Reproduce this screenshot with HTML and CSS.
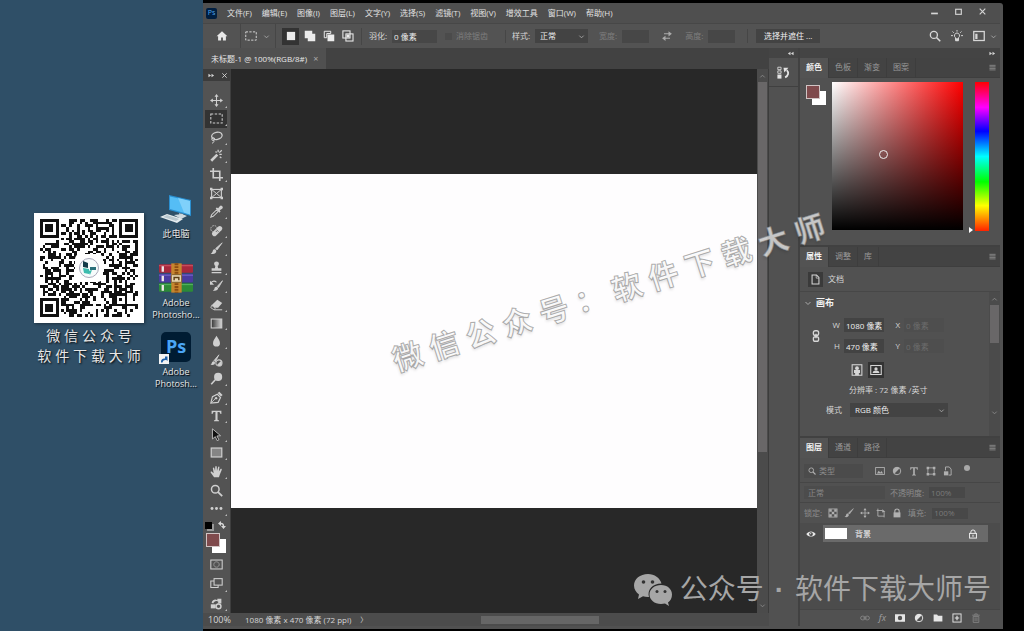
FILE: index.html
```html
<!DOCTYPE html>
<html lang="zh-CN">
<head>
    <meta charset="UTF-8">
    <meta name="viewport" content="width=device-width, initial-scale=1.0">
    <title>未标题-1</title>
    <link rel="stylesheet" href="styles.css">
</head>
<body>

<!-- Icon sprite -->
<svg class="sprite" xmlns="http://www.w3.org/2000/svg">
    <symbol id="i-home" viewBox="0 0 16 16"><path d="M8 1.5 0.8 8.3h2V14h4v-4h2.4v4h4V8.3h2z" fill="currentColor"/></symbol>
    <symbol id="i-marquee" viewBox="0 0 16 16"><rect x="1" y="2.5" width="14" height="11" fill="none" stroke="currentColor" stroke-width="1.3" stroke-dasharray="3 1.8"/></symbol>
    <symbol id="i-chev" viewBox="0 0 16 16"><path d="M3 6l5 5 5-5" fill="none" stroke="currentColor" stroke-width="2"/></symbol>
    <symbol id="i-new" viewBox="0 0 16 16"><rect x="2.5" y="2.5" width="11" height="11" fill="currentColor"/></symbol>
    <symbol id="i-add" viewBox="0 0 16 16"><path d="M1 1h10v4h4v10H5v-4H1z" fill="currentColor"/></symbol>
    <symbol id="i-sub" viewBox="0 0 16 16"><path d="M1.7 1.7h8.6v3H5v5.600H1.7z" fill="none" stroke="currentColor" stroke-width="1.3"/><rect x="6" y="6" width="9" height="9" fill="currentColor"/></symbol>
    <symbol id="i-cross" viewBox="0 0 16 16"><rect x="1.2" y="1.2" width="9.5" height="9.5" fill="none" stroke="currentColor" stroke-width="1.4"/><rect x="5.2" y="5.2" width="9.5" height="9.5" fill="none" stroke="currentColor" stroke-width="1.4"/><rect x="6" y="6" width="4" height="4" fill="currentColor"/></symbol>
    <symbol id="i-swap" viewBox="0 0 16 16"><path d="M4 5h7M12 11H5" stroke="currentColor" stroke-width="1.6"/><path d="M10 1.5 14.5 5 10 8.5zM6 7.5 1.5 11 6 14.5z" fill="currentColor"/></symbol>
    <symbol id="i-search" viewBox="0 0 16 16"><circle cx="6.5" cy="6.5" r="4.7" fill="none" stroke="currentColor" stroke-width="1.8"/><path d="M10 10l5 5" stroke="currentColor" stroke-width="2.2"/></symbol>
    <symbol id="i-bulb" viewBox="0 0 16 16"><path d="M8 4a3.5 3.5 0 0 0-2 6.3V14h4v-3.7A3.5 3.5 0 0 0 8 4z" fill="none" stroke="currentColor" stroke-width="1.3"/><path d="M6 11h4v4H6z" fill="currentColor"/><path d="M8 0v2.2M2 2l1.7 1.7M14 2l-1.7 1.7M0 7.5h2.6M13.4 7.5H16" stroke="currentColor" stroke-width="1.3"/></symbol>
    <symbol id="i-layout" viewBox="0 0 16 16"><rect x="1" y="2" width="14" height="12" fill="none" stroke="currentColor" stroke-width="1.7"/><path d="M3 5h3v7H3z" fill="currentColor"/></symbol>
    <symbol id="i-min" viewBox="0 0 16 16"><path d="M2 10h12v3H2z" fill="currentColor"/></symbol>
    <symbol id="i-max" viewBox="0 0 16 16"><rect x="3" y="4" width="10" height="9" fill="none" stroke="currentColor" stroke-width="2"/></symbol>
    <symbol id="i-close" viewBox="0 0 16 16"><path d="M3 3l10 10M13 3L3 13" stroke="currentColor" stroke-width="2"/></symbol>
    <symbol id="i-dbl" viewBox="0 0 16 16"><path d="M1 4l6 4-6 4zM8 4l6 4-6 4z" fill="currentColor"/></symbol>
    <symbol id="i-dbl-l" viewBox="0 0 16 16"><path d="M8 4 2 8l6 4zM15 4 9 8l6 4z" fill="currentColor"/></symbol>
    <symbol id="i-menu" viewBox="0 0 16 16"><path d="M1 3h14M1 6.5h14M1 10h14M1 13.5h14" stroke="currentColor" stroke-width="1.7"/></symbol>
    <symbol id="i-move" viewBox="0 0 16 16"><path d="M8 2v12M2 8h12" stroke="currentColor" stroke-width="1.3"/><path d="M8 0l2.5 3.5h-5zM8 16l2.5-3.5h-5zM0 8l3.5-2.5v5zM16 8l-3.5-2.5v5z" fill="currentColor"/></symbol>
    <symbol id="i-lasso" viewBox="0 0 16 16"><ellipse cx="8.5" cy="6" rx="6.5" ry="4.3" transform="rotate(-12 8.5 6)" fill="none" stroke="currentColor" stroke-width="1.6"/><circle cx="4" cy="10" r="1.8" fill="none" stroke="currentColor" stroke-width="1.2"/><path d="M4.500 11.500c1 1.500 0 3-2 3.500" fill="none" stroke="currentColor" stroke-width="1.2"/></symbol>
    <symbol id="i-wand" viewBox="0 0 16 16"><path d="M1.5 14.5 9 7" stroke="currentColor" stroke-width="3.2"/><path d="M10 1v3M14.5 6.5h-3M7 3l1 1.5M14 11l-2-1.500M14.500 1.500l-3 3" stroke="currentColor" stroke-width="1.6"/></symbol>
    <symbol id="i-crop" viewBox="0 0 16 16"><path d="M4 0v12h12M0 4h12v12" fill="none" stroke="currentColor" stroke-width="2"/></symbol>
    <symbol id="i-frame" viewBox="0 0 16 16"><rect x="2" y="3" width="12" height="10" fill="none" stroke="currentColor" stroke-width="1.4"/><path d="M2 3l12 10M14 3L2 13" stroke="currentColor" stroke-width="1.2"/><path d="M0 1h3v3H0zM13 1h3v3h-3zM0 12h3v3H0zM13 12h3v3h-3z" fill="currentColor"/></symbol>
    <symbol id="i-dropper" viewBox="0 0 16 16"><path d="M1 15l1-3 6-6 2 2-6 6z" fill="none" stroke="currentColor" stroke-width="1.3"/><path d="M7 4l1.5-1 1.5 1 2-2.500a2 2 0 0 1 3 3L12 6.500l1 1.500-1.500 1.500z" fill="currentColor"/></symbol>
    <symbol id="i-heal" viewBox="0 0 16 16"><path d="M5.500 12 12 5.500" stroke="currentColor" stroke-width="6" stroke-linecap="round"/><circle cx="5" cy="6" r="4" fill="none" stroke="currentColor" stroke-dasharray="2 1.2"/><path d="M8 7l2.500 2.500M7 8.500l1.500 1.500" stroke="#535353"/></symbol>
    <symbol id="i-brush" viewBox="0 0 16 16"><path d="M15 1 7 8l1.700 1.700z" fill="currentColor" stroke="currentColor"/><path d="M6.500 9c-2-.5-3 .8-3.200 2.300C3 13 2 13.500.8 14c2.500 1.500 7 .7 7-3.200z" fill="currentColor"/></symbol>
    <symbol id="i-stamp" viewBox="0 0 16 16"><circle cx="8" cy="3.500" r="3" fill="currentColor"/><path d="M6.800 5h2.400l.8 4h4v3H2V9h4zM2 13.500h12V15H2z" fill="currentColor"/></symbol>
    <symbol id="i-histbrush" viewBox="0 0 16 16"><path d="M15.500 2 9 9l1.500 1.500z" fill="currentColor" stroke="currentColor"/><path d="M8.500 9.500c-2-.3-3 1-3 2.200 0 1.300-1 2-2 2.300 2.500 1 6.500.5 6.500-2.800z" fill="currentColor"/><path d="M1 5c2-3 5-3 7-1" fill="none" stroke="currentColor" stroke-width="1.3"/><path d="M0 2v5h5z" fill="currentColor"/></symbol>
    <symbol id="i-eraser" viewBox="0 0 16 16"><path d="M9 2l6 4-5 6H6L2 9z" fill="currentColor"/><path d="M2 9l4.500 3.500L5 14.500 1 12z" fill="none" stroke="currentColor"/><path d="M5 14.500h10" stroke="currentColor" stroke-width="1.2"/></symbol>
    <symbol id="i-gradient" viewBox="0 0 16 16"><linearGradient id="g1"><stop offset="0" stop-color="#333"/><stop offset="1" stop-color="#d8d8d8"/></linearGradient><rect x="1.5" y="2.5" width="13" height="11" fill="url(#g1)" stroke="currentColor" stroke-width="1.3"/></symbol>
    <symbol id="i-drop" viewBox="0 0 16 16"><path d="M8 1c2 3.500 4.300 5.800 4.300 9a4.300 4.300 0 0 1-8.600 0C3.700 6.800 6 4.500 8 1z" fill="currentColor"/></symbol>
    <symbol id="i-mixer" viewBox="0 0 16 16"><path d="M11 1 5 8l1.500 1.500z" fill="currentColor" stroke="currentColor"/><path d="M4.500 9C2 9 3 12 .5 13c2 1 6 .7 5.700-2.500z" fill="currentColor"/><circle cx="11" cy="11" r="3.8" fill="none" stroke="currentColor" stroke-width="1.3"/><path d="M8.500 13.500l5-5A3.800 3.800 0 0 1 11 15z" fill="currentColor"/></symbol>
    <symbol id="i-dodge" viewBox="0 0 16 16"><circle cx="10" cy="6" r="5" fill="currentColor"/><path d="M1.500 15l5-5.500" stroke="currentColor" stroke-width="2"/></symbol>
    <symbol id="i-pen" viewBox="0 0 16 16"><path d="M1 15l2-8 6-3 4 4-3 6z" fill="none" stroke="currentColor" stroke-width="1.4"/><path d="M9.500 2.500 11.500.8l4 4-2 2z" fill="currentColor"/><path d="M1.500 14.500 7 9" stroke="currentColor"/><circle cx="7.500" cy="8.800" r="1.500" fill="currentColor"/></symbol>
    <symbol id="i-type" viewBox="0 0 16 16"><path d="M2 2h12v4h-1.200c-.2-1.700-.8-2.300-2.600-2.300H9.300v9c0 .9.300 1.100 1.800 1.200V15H4.900v-1.100c1.500-.1 1.800-.3 1.800-1.200v-9h-.9c-1.800 0-2.400.6-2.600 2.300H2z" fill="currentColor"/></symbol>
    <symbol id="i-arrow" viewBox="0 0 16 16"><path d="M3 1l10 8.500-4.500.3 2.500 4.700-2.200 1-2.300-4.800L3 13.500z" fill="#111" stroke="currentColor"/></symbol>
    <symbol id="i-rect" viewBox="0 0 16 16"><rect x="1.5" y="2.5" width="13" height="11" fill="#858585" stroke="currentColor" stroke-width="1.5"/></symbol>
    <symbol id="i-hand" viewBox="0 0 16 16"><path d="M5 15 1 9.500c-.8-1.200.8-2 1.700-1L4.500 10 3.500 4c0-1.200 1.400-1.300 1.700-.2L6.200 7.500 6.500 2c.1-1.200 1.700-1.200 1.800 0l.3 5.300L10 2.500c.3-1.200 1.800-.8 1.600.3l-.7 5.200 2-3c.8-1 2 0 1.500 1L12 12l-1 3z" fill="currentColor"/></symbol>
    <symbol id="i-dots" viewBox="0 0 16 16"><circle cx="2.500" cy="8" r="1.800" fill="currentColor"/><circle cx="8" cy="8" r="1.800" fill="currentColor"/><circle cx="13.500" cy="8" r="1.800" fill="currentColor"/></symbol>
    <symbol id="i-mask" viewBox="0 0 16 16"><rect x="1" y="2.5" width="14" height="11" fill="none" stroke="currentColor" stroke-width="1.3"/><circle cx="8" cy="8" r="3.3" fill="none" stroke="currentColor" stroke-dasharray="1.5 1"/></symbol>
    <symbol id="i-screen" viewBox="0 0 16 16"><path d="M5 5H1v8h9v-3" fill="none" stroke="currentColor" stroke-width="1.3"/><rect x="5" y="2" width="10" height="8" fill="none" stroke="currentColor" stroke-width="1.3"/></symbol>
    <symbol id="i-share" viewBox="0 0 16 16"><path d="M2 7c1-4 5-5 7-3V2h5v6H9L10.500 6C8 4 5 5 4 8z" fill="currentColor"/><path d="M1 9h6v5H1z" fill="currentColor"/><circle cx="10.500" cy="11.500" r="3" fill="none" stroke="currentColor" stroke-width="1.8"/></symbol>
    <symbol id="i-curve" viewBox="0 0 16 16"><path d="M4 5c5-1 7 2 7 6" fill="none" stroke="currentColor" stroke-width="3"/><path d="M6 0v10L0 5zM6 10h10l-5 6z" fill="currentColor"/></symbol>
    <symbol id="i-history" viewBox="0 0 16 16"><path d="M1 1.500h4v3H1zM1 6h4v3H1z" fill="none" stroke="currentColor"/><path d="M.5 10.500h5v5h-5z" fill="currentColor"/><path d="M10 14c4-2 5-6 2-9" fill="none" stroke="currentColor" stroke-width="2.2"/><path d="M8 2h6l-5 6z" fill="currentColor"/></symbol>
    <symbol id="i-doc" viewBox="0 0 16 16"><path d="M3 1.500h6.500L13 5v9.500H3z" fill="none" stroke="currentColor" stroke-width="1.5"/><path d="M9 1.500V6h4" fill="none" stroke="currentColor"/></symbol>
    <symbol id="i-link" viewBox="0 0 16 16"><rect x="4.500" y="1" width="7" height="6" rx="2.500" fill="none" stroke="currentColor" stroke-width="1.8"/><rect x="4.500" y="9" width="7" height="6" rx="2.500" fill="none" stroke="currentColor" stroke-width="1.8"/><path d="M8 5v6" stroke="currentColor" stroke-width="1.8"/></symbol>
    <symbol id="i-portrait" viewBox="0 0 16 16"><rect x="1.5" y="1" width="13" height="14" fill="none" stroke="currentColor" stroke-width="1.4"/><circle cx="8" cy="5.500" r="2.500" fill="currentColor"/><path d="M4 8h8v4h-1.500V15h-5v-3H4z" fill="currentColor"/></symbol>
    <symbol id="i-landscape" viewBox="0 0 16 16"><rect x="1" y="2" width="14" height="12" fill="none" stroke="currentColor" stroke-width="1.4"/><circle cx="8" cy="6.500" r="2.200" fill="currentColor"/><path d="M3.500 12c0-2.500 2-3.500 4.500-3.500s4.500 1 4.500 3.500z" fill="currentColor"/></symbol>
    <symbol id="i-image" viewBox="0 0 16 16"><rect x="1" y="2.5" width="14" height="11" fill="none" stroke="currentColor" stroke-width="1.4"/><path d="M3 12l3-4.500 2.500 3L10.500 8l2.500 4z" fill="currentColor"/></symbol>
    <symbol id="i-adjust" viewBox="0 0 16 16"><circle cx="8" cy="8" r="6" fill="none" stroke="currentColor" stroke-width="1.5"/><path d="M12.300 3.700A6 6 0 0 1 3.700 12.300z" transform="rotate(180 8 8)" fill="currentColor"/></symbol>
    <symbol id="i-shape" viewBox="0 0 16 16"><rect x="3" y="3" width="10" height="10" fill="none" stroke="currentColor" stroke-width="1.3"/><path d="M1 1h4v4H1zM11 1h4v4h-4zM1 11h4v4H1zM11 11h4v4h-4z" fill="currentColor"/></symbol>
    <symbol id="i-smart" viewBox="0 0 16 16"><path d="M4 7V1.500h6L13 5v9.500H9" fill="none" stroke="currentColor" stroke-width="1.5"/><path d="M1.500 8.500h7V15h-7z" fill="currentColor"/></symbol>
    <symbol id="i-checker" viewBox="0 0 16 16"><rect x="1.5" y="1.5" width="13" height="13" fill="none" stroke="currentColor" stroke-width="1.3"/><path d="M2 2h4v4H2zM10 2h4v4h-4zM6 6h4v4H6zM2 10h4v4H2zM10 10h4v4h-4z" fill="currentColor"/></symbol>
    <symbol id="i-board" viewBox="0 0 16 16"><path d="M3 1v12h10M1 4h9l3 3v8" fill="none" stroke="currentColor" stroke-width="1.4"/><path d="M10 2l5 4-5 1z" fill="currentColor"/></symbol>
    <symbol id="i-lock" viewBox="0 0 16 16"><path d="M4.500 8V5a3.500 3.500 0 0 1 7 0v3" fill="none" stroke="currentColor" stroke-width="1.8"/><rect x="2.500" y="7" width="11" height="8" fill="currentColor"/></symbol>
    <symbol id="i-lock-o" viewBox="0 0 16 16"><path d="M4.500 7V5a3.500 3.500 0 0 1 7 0v2" fill="none" stroke="currentColor" stroke-width="1.5"/><rect x="2.500" y="7" width="11" height="7.500" fill="none" stroke="currentColor" stroke-width="1.5"/><path d="M7.200 9h1.600v3.500H7.200z" fill="currentColor"/></symbol>
    <symbol id="i-eye" viewBox="0 0 16 16"><path d="M.5 8C4 2.500 12 2.500 15.500 8 12 13.500 4 13.500.5 8z" fill="currentColor"/><circle cx="8" cy="8" r="3" fill="#444"/><circle cx="7.500" cy="7.500" r="1" fill="currentColor"/></symbol>
    <symbol id="i-chain" viewBox="0 0 16 16"><rect x="1" y="5" width="7" height="6" rx="3" fill="none" stroke="currentColor" stroke-width="1.5"/><rect x="8" y="5" width="7" height="6" rx="3" fill="none" stroke="currentColor" stroke-width="1.5"/><path d="M5 8h6" stroke="currentColor" stroke-width="1.5"/></symbol>
    <symbol id="i-addmask" viewBox="0 0 16 16"><path d="M0 2h16v12H0zM8 4.500a3.500 3.500 0 1 0 0 7 3.500 3.500 0 0 0 0-7z" fill="currentColor" fill-rule="evenodd"/></symbol>
    <symbol id="i-folder" viewBox="0 0 16 16"><path d="M1 2.500h5.500L8 4.500h7v9H1z" fill="currentColor"/></symbol>
    <symbol id="i-plus" viewBox="0 0 16 16"><rect x="1.5" y="1.5" width="13" height="13" fill="none" stroke="currentColor" stroke-width="1.5"/><path d="M8 4.500v7M4.500 8h7" stroke="currentColor" stroke-width="1.8"/></symbol>
    <symbol id="i-trash" viewBox="0 0 16 16"><path d="M2 3.500h12M6 3V1.500h4V3M3.500 5.500h9V15h-9zM6.500 7v6M9.500 7v6" fill="none" stroke="currentColor" stroke-width="1.4"/></symbol>
</svg>

<div class="desktop">

    <!-- Desktop icons -->
    <aside class="shortcuts">
        <div class="qr-card">
            <div class="qr">
                <svg id="qrCode" viewBox="0 0 37 37" shape-rendering="crispEdges"></svg>
                <svg class="qr-logo" viewBox="0 0 28 28">
                    <rect width="28" height="28" rx="5" fill="#fff"/>
                    <circle cx="14" cy="14" r="9.5" fill="#f6fbfb" stroke="#aab"/>
                    <path d="M8 7l5 2v5l-5-1z" fill="#123b48"/>
                    <path d="M8 14l6 1v5l-5-1zM13 17l4-1-2 5z" fill="#3dbcae"/>
                    <path d="M15 13h6v3h-6z" fill="#296f7a"/>
                </svg>
            </div>
            <p>微 信 公 众 号</p>
            <p>软 件 下 载 大 师</p>
        </div>
        <nav class="icons">
            <a href="#" class="shortcut">
                <svg viewBox="0 0 32 30">
                    <path d="M9 1l22 5v16L9 16z" fill="#2a8fd0"/><path d="M10 2.500l20 4.500v13.500L10 15z" fill="#55bdf5"/><path d="M18 4l12 3v13.500l-6-2z" fill="#7fd0fa"/>
                    <path d="M19 19l4 1v3h-4z" fill="#9fb3bf"/><path d="M14 21l8-1 5 2-6 3z" fill="#cfd9df"/>
                    <path d="M0 23l7-3 16 5-6 4z" fill="#e6ecef"/><path d="M3 23l4-2 12 4-3 2z" fill="#bac8d0"/>
                </svg>
                <span>此电脑</span>
            </a>
            <a href="#" class="shortcut">
                <svg viewBox="0 0 36 31">
                    <rect x="0" y="1" width="36" height="9" rx="1" fill="#a8283c"/><rect x="0" y="11" width="36" height="9" rx="1" fill="#4a3ba0"/><rect x="0" y="21" width="36" height="9" rx="1" fill="#2c8a38"/>
                    <path d="M0 2.500h36" stroke="#cf5a68"/><path d="M0 12.500h36" stroke="#7a6cd0"/><path d="M0 22.500h36" stroke="#58b862"/>
                    <path d="M4 3v6M4 13v6M4 23v6" stroke="#efe8e8" stroke-width="2.5"/>
                    <rect x="13" y="0" width="11" height="31" fill="#c6862e"/><path d="M18.500 0v31" stroke="#8c4c12" stroke-width="4" stroke-dasharray="2 1"/>
                    <rect x="13" y="12" width="11" height="8" rx="1" fill="#e8d6b0" stroke="#7b5a26"/><path d="M16 18v-3h5v3" fill="none" stroke="#5b3d15" stroke-width="1.5"/>
                </svg>
                <span>Adobe<br>Photosho...</span>
            </a>
            <a href="#" class="shortcut">
                <span class="ps-big">Ps<svg viewBox="0 0 10 10"><rect width="10" height="10" fill="#f4f4f4"/><path d="M2 8.500c0-3 1-4 4-4V2.500h2.500V7L7.300 6C5 5.800 4 6.500 3.500 8.500z" fill="#1c5fa8"/></svg></span>
                <span>Adobe<br>Photosh...</span>
            </a>
        </nav>
    </aside>

    <!-- Application window -->
    <main class="app">
        <header class="menubar">
            <span class="ps-small">Ps</span>
            <nav class="menus">
                <a href="#">文件(F)</a>
                <a href="#">编辑(E)</a>
                <a href="#">图像(I)</a>
                <a href="#">图层(L)</a>
                <a href="#">文字(Y)</a>
                <a href="#">选择(S)</a>
                <a href="#">滤镜(T)</a>
                <a href="#">视图(V)</a>
                <a href="#">增效工具</a>
                <a href="#">窗口(W)</a>
                <a href="#">帮助(H)</a>
            </nav>
            <div class="window-buttons">
                <button type="button" aria-label="最小化"><svg><use href="#i-min"/></svg></button>
                <button type="button" aria-label="最大化"><svg><use href="#i-max"/></svg></button>
                <button type="button" aria-label="关闭"><svg><use href="#i-close"/></svg></button>
            </div>
        </header>

        <div class="options">
            <button type="button" class="home" aria-label="主页"><svg><use href="#i-home"/></svg></button>
            <button type="button" class="preset" aria-label="矩形选框"><svg><use href="#i-marquee"/></svg><svg class="chev"><use href="#i-chev"/></svg></button>
            <div class="modes">
                <button type="button" class="active" aria-label="新选区"><svg><use href="#i-new"/></svg></button>
                <button type="button" aria-label="添加到选区"><svg><use href="#i-add"/></svg></button>
                <button type="button" aria-label="从选区减去"><svg><use href="#i-sub"/></svg></button>
                <button type="button" aria-label="与选区交叉"><svg><use href="#i-cross"/></svg></button>
            </div>
            <div class="group feather">
                <label for="feather">羽化:</label>
                <input type="text" id="feather" value="0 像素">
                <input type="checkbox" id="alias" disabled>
                <label for="alias" class="dim">消除锯齿</label>
            </div>
            <div class="group sizes">
                <label for="style">样式:</label>
                <span class="select"><select id="style"><option>正常</option></select><svg><use href="#i-chev"/></svg></span>
                <label for="optWidth" class="dim">宽度:</label>
                <input type="text" id="optWidth" disabled>
                <button type="button" class="swap" aria-label="互换"><svg><use href="#i-swap"/></svg></button>
                <label for="optHeight" class="dim">高度:</label>
                <input type="text" id="optHeight" disabled>
            </div>
            <button type="button" class="mask-button">选择并遮住 ...</button>
            <div class="right-tools">
                <button type="button" aria-label="搜索"><svg><use href="#i-search"/></svg></button>
                <button type="button" aria-label="学习"><svg><use href="#i-bulb"/></svg></button>
                <button type="button" aria-label="工作区"><svg><use href="#i-layout"/></svg><svg class="chev"><use href="#i-chev"/></svg></button>
            </div>
        </div>

        <div class="workspace">
            <section class="document">
                <div class="doc-tabs">
                    <a href="#" class="doc-tab">未标题-1 @ 100%(RGB/8#) <small>×</small></a>
                </div>
                <div class="stage">
                    <div class="toolbox">
                        <div class="toolbox-head"><svg><use href="#i-dbl"/></svg><svg><use href="#i-close"/></svg></div>
                        <div class="tools">
                            <button type="button" class="more" aria-label="移动"><svg><use href="#i-move"/></svg></button>
                            <button type="button" class="more active" aria-label="选框"><svg><use href="#i-marquee"/></svg></button>
                            <button type="button" class="more" aria-label="套索"><svg><use href="#i-lasso"/></svg></button>
                            <button type="button" class="more" aria-label="魔棒"><svg><use href="#i-wand"/></svg></button>
                            <button type="button" class="more" aria-label="裁剪"><svg><use href="#i-crop"/></svg></button>
                            <button type="button" aria-label="图框"><svg><use href="#i-frame"/></svg></button>
                            <button type="button" class="more" aria-label="吸管"><svg><use href="#i-dropper"/></svg></button>
                            <button type="button" class="more" aria-label="修复画笔"><svg><use href="#i-heal"/></svg></button>
                            <button type="button" class="more" aria-label="画笔"><svg><use href="#i-brush"/></svg></button>
                            <button type="button" class="more" aria-label="图章"><svg><use href="#i-stamp"/></svg></button>
                            <button type="button" class="more" aria-label="历史画笔"><svg><use href="#i-histbrush"/></svg></button>
                            <button type="button" class="more" aria-label="橡皮擦"><svg><use href="#i-eraser"/></svg></button>
                            <button type="button" class="more" aria-label="渐变"><svg><use href="#i-gradient"/></svg></button>
                            <button type="button" class="more" aria-label="模糊"><svg><use href="#i-drop"/></svg></button>
                            <button type="button" aria-label="混合"><svg><use href="#i-mixer"/></svg></button>
                            <button type="button" class="more" aria-label="减淡"><svg><use href="#i-dodge"/></svg></button>
                            <button type="button" class="more" aria-label="钢笔"><svg><use href="#i-pen"/></svg></button>
                            <button type="button" class="more" aria-label="文字"><svg><use href="#i-type"/></svg></button>
                            <button type="button" class="more" aria-label="路径选择"><svg><use href="#i-arrow"/></svg></button>
                            <button type="button" class="more" aria-label="矩形"><svg><use href="#i-rect"/></svg></button>
                            <button type="button" class="more" aria-label="抓手"><svg><use href="#i-hand"/></svg></button>
                            <button type="button" aria-label="缩放"><svg><use href="#i-search"/></svg></button>
                            <button type="button" class="more" aria-label="更多"><svg><use href="#i-dots"/></svg></button>
                        </div>
                        <div class="default-colors"><i></i><svg><use href="#i-curve"/></svg></div>
                        <div class="swatches"><i class="fg"></i><i class="bg"></i></div>
                        <div class="tools tools-bottom">
                            <button type="button" aria-label="快速蒙版"><svg><use href="#i-mask"/></svg></button>
                            <button type="button" class="more" aria-label="屏幕模式"><svg><use href="#i-screen"/></svg></button>
                            <button type="button" class="more" aria-label="共享"><svg><use href="#i-share"/></svg></button>
                        </div>
                    </div>
                    <div class="canvas">
                        <div class="page"></div>
                    </div>
                    <div class="vscroll"><svg class="up"><use href="#i-chev"/></svg><i></i><svg><use href="#i-chev"/></svg></div>
                </div>
                <footer class="status">
                    <span class="zoom">100%</span>
                    <span>1080 像素 x 470 像素 (72 ppi)</span>
                    <span class="next">〉</span>
                    <div class="hscroll"><i></i></div>
                </footer>
            </section>

            <div class="dock">
                <div class="dock-head"><svg><use href="#i-dbl-l"/></svg></div>
                <button type="button" aria-label="历史记录"><svg><use href="#i-history"/></svg></button>
            </div>

            <div class="panels">
                <div class="dock-head"><svg><use href="#i-dbl"/></svg></div>

                <section class="panel">
                    <div class="panel-tabs">
                        <a href="#" class="active">颜色</a><a href="#">色板</a><a href="#">渐变</a><a href="#">图案</a>
                        <svg><use href="#i-menu"/></svg>
                    </div>
                    <div class="color-body">
                        <div class="swatches"><i class="fg"></i><i class="bg"></i></div>
                        <div class="field"><i></i></div>
                        <div class="hue"><i></i></div>
                    </div>
                </section>

                <section class="panel">
                    <div class="panel-tabs">
                        <a href="#" class="active">属性</a><a href="#">调整</a><a href="#">库</a>
                        <svg><use href="#i-menu"/></svg>
                    </div>
                    <div class="doc-row"><span><svg><use href="#i-doc"/></svg></span>文档</div>
                    <div class="props">
                        <div class="props-main">
                            <h2><svg><use href="#i-chev"/></svg>画布</h2>
                            <div class="dims">
                                <svg><use href="#i-link"/></svg>
                                <label for="w">W</label><input type="text" id="w" value="1080 像素">
                                <label for="x">X</label><input type="text" id="x" value="0 像素" disabled>
                                <label for="h">H</label><input type="text" id="h" value="470 像素">
                                <label for="y">Y</label><input type="text" id="y" value="0 像素" disabled>
                            </div>
                            <div class="orient">
                                <button type="button" aria-label="纵向"><svg><use href="#i-portrait"/></svg></button>
                                <button type="button" class="active" aria-label="横向"><svg><use href="#i-landscape"/></svg></button>
                            </div>
                            <p>分辨率 : 72 像素 /英寸</p>
                            <div class="mode">
                                <label for="mode">模式</label>
                                <span class="select"><select id="mode"><option>RGB 颜色</option></select><svg><use href="#i-chev"/></svg></span>
                            </div>
                        </div>
                        <div class="vscroll"><svg class="up"><use href="#i-chev"/></svg><i></i><svg><use href="#i-chev"/></svg></div>
                    </div>
                </section>

                <section class="panel layers">
                    <div class="panel-tabs">
                        <a href="#" class="active">图层</a><a href="#">通道</a><a href="#">路径</a>
                        <svg><use href="#i-menu"/></svg>
                    </div>
                    <div class="row filter">
                        <span class="kind"><svg><use href="#i-search"/></svg>类型</span>
                        <svg><use href="#i-image"/></svg>
                        <svg><use href="#i-adjust"/></svg>
                        <svg><use href="#i-type"/></svg>
                        <svg><use href="#i-shape"/></svg>
                        <svg><use href="#i-smart"/></svg>
                        <i class="dot"></i>
                    </div>
                    <div class="row blend">
                        <select aria-label="混合模式" disabled><option>正常</option></select>
                        <label for="opacity">不透明度:</label>
                        <input type="text" id="opacity" value="100%" disabled>
                    </div>
                    <div class="row locks">
                        <span>锁定:</span>
                        <svg><use href="#i-checker"/></svg>
                        <svg><use href="#i-brush"/></svg>
                        <svg><use href="#i-move"/></svg>
                        <svg><use href="#i-board"/></svg>
                        <svg><use href="#i-lock"/></svg>
                        <label for="fill">填充:</label>
                        <input type="text" id="fill" value="100%" disabled>
                    </div>
                    <div class="layer-list">
                        <div class="layer">
                            <svg><use href="#i-eye"/></svg>
                            <div class="layer-name"><i></i><span>背景</span><svg><use href="#i-lock-o"/></svg></div>
                        </div>
                    </div>
                    <div class="layer-actions">
                        <button type="button" class="dim" aria-label="链接"><svg><use href="#i-chain"/></svg></button>
                        <button type="button" class="fx">fx</button>
                        <button type="button" aria-label="蒙版"><svg><use href="#i-addmask"/></svg></button>
                        <button type="button" aria-label="调整图层"><svg><use href="#i-adjust"/></svg></button>
                        <button type="button" aria-label="组"><svg><use href="#i-folder"/></svg></button>
                        <button type="button" aria-label="新建图层"><svg><use href="#i-plus"/></svg></button>
                        <button type="button" class="dim" aria-label="删除"><svg><use href="#i-trash"/></svg></button>
                    </div>
                </section>
            </div>
        </div>
    </main>

    <!-- Watermarks -->
    <div class="stamp">微 信 公 众 号 ： 软 件 下 载 大 师</div>
    <div class="brand">
        <svg viewBox="0 0 38 33">
            <path d="M14 0C6 0 0 5 0 11.500c0 3.700 2 6.800 5 9L4 25l5-2.700c1.500.4 3.200.7 5 .7h1C13 16 18 9.500 27.500 9.500 26 4 20.500 0 14 0z" fill="currentColor"/>
            <path d="M27 11c-6.500 0-11.500 4.200-11.500 9.500S20.500 30 27 30c1.400 0 2.700-.2 4-.5l4 2.500-1-3.500c2.500-1.800 4-4.500 4-8C38 15.200 33.500 11 27 11z" fill="currentColor"/>
            <g fill="#333"><circle cx="9.500" cy="8" r="1.8"/><circle cx="18.500" cy="8" r="1.8"/><circle cx="23" cy="17.500" r="1.5"/><circle cx="31" cy="17.500" r="1.5"/></g>
        </svg>
        <span>公众号<b>·</b>软件下载大师号</span>
    </div>
</div>

<script src="script.js"></script>
</body>
</html>
```

FILE: styles.css
```css
* {
    box-sizing: border-box;
}

body {
    margin: 0;
    font-family: "Open Sans", "Noto Sans CJK SC", sans-serif;
    font-size: 8px;
    line-height: 12px;
    color: #d6d6d6;
    background: #000;
}

a {
    color: inherit;
    text-decoration: none;
}

button,
input,
select {
    margin: 0;
    padding: 0;
    border: none;
    font: inherit;
    color: inherit;
    background: none;
}

svg {
    display: block;
    flex: none;
}

i {
    display: block;
}

.sprite {
    position: absolute;
    width: 0;
    height: 0;
}

.desktop {
    position: relative;
    display: grid;
    grid-template-columns: 203px 1fr 21px;
    min-height: 100vh;
    overflow: hidden;
}

/* desktop shortcuts */
.shortcuts {
    display: flex;
    gap: 6px;
    padding: 194px 1px 0 34px;
    background: #2f4f67;
    color: #e6e6e6;
}

.qr-card {
    width: 110px;
    padding-top: 19px;
}

.qr-card p {
    margin: 0;
    font-family: "Liberation Sans", "Noto Sans CJK SC", sans-serif;
    font-size: 14px;
    line-height: 20px;
    text-align: center;
    white-space: nowrap;
    text-shadow: 1px 1px 2px #000;
}

.qr {
    display: grid;
    place-items: center;
    padding: 6px;
    margin-bottom: 3px;
    background: #fff;
    box-shadow: 1px 1px 3px rgba(0, 0, 0, 0.4);
}

.qr svg {
    grid-area: 1 / 1;
    width: 100%;
}

.qr .qr-logo {
    width: 28px;
}

.icons {
    flex: 1;
    display: flex;
    flex-direction: column;
}

.shortcut {
    display: flex;
    flex-direction: column;
    align-items: center;
    gap: 4px;
    height: 69px;
    font-size: 9px;
    text-align: center;
    text-shadow: 1px 1px 1px #000;
}

.shortcut > svg {
    width: 34px;
    height: 30px;
}

.ps-big {
    position: relative;
    width: 30px;
    height: 30px;
    border-radius: 5px;
    background: #001c33;
    color: #4aa5f5;
    font-size: 18px;
    font-weight: bold;
    line-height: 28px;
    text-shadow: none;
}

.ps-big svg {
    position: absolute;
    left: -2px;
    bottom: -2px;
    width: 10px;
    height: 10px;
}

/* window */
.app {
    display: flex;
    flex-direction: column;
    margin: 3px 0 2px;
    padding: 0 3px 3px 0;
    border-radius: 0 3px 0 0;
    background: #515151;
    box-shadow: 0 0 0 3px #000;
    clip-path: inset(-3px -3px -3px 0);
}

.menubar {
    display: flex;
    align-items: center;
    height: 20px;
    padding-left: 3px;
    background: #4f4f4f;
}

.ps-small {
    width: 11px;
    height: 11px;
    border-radius: 2px;
    background: #001e40;
    color: #4fa6ef;
    font-size: 7px;
    line-height: 10px;
    text-align: center;
}

.menus {
    display: flex;
    gap: 10px;
    padding-left: 10px;
    white-space: nowrap;
    color: #e2e2e2;
}

.window-buttons {
    display: flex;
    gap: 8px;
    margin-left: auto;
    padding: 0 10px 4px 0;
}

.window-buttons button {
    display: grid;
    place-items: center;
    width: 16px;
}

.window-buttons svg {
    width: 9px;
    height: 9px;
}

.options {
    display: flex;
    align-items: center;
    height: 25px;
    border-top: 1px solid #474747;
    background: #535353;
    white-space: nowrap;
}

.options svg {
    width: 12px;
    height: 12px;
}

.options .chev,
.select svg {
    width: 7px;
    height: 7px;
    color: #aaa;
}

.home {
    display: grid;
    place-items: center;
    width: 38px;
    height: 24px;
    border-right: 1px solid #464646;
    color: #e8e8e8;
}

.preset {
    display: flex;
    align-items: center;
    gap: 6px;
    width: 35px;
    height: 24px;
    padding-left: 4px;
    border-right: 1px solid #464646;
}

.modes {
    display: flex;
    gap: 2px;
    width: 86px;
    padding-left: 6px;
    border-right: 1px solid #464646;
}

.modes button {
    display: grid;
    place-items: center;
    width: 17px;
    height: 17px;
    color: #ececec;
}

.modes .active {
    background: #333;
}

.group {
    display: flex;
    align-items: center;
}

.feather {
    width: 144px;
    padding-left: 7px;
    border-right: 1px solid #464646;
}

.sizes {
    width: 242px;
    padding-left: 6px;
    border-right: 1px solid #464646;
}

.group input[type="text"] {
    width: 27px;
    height: 13px;
    padding: 0 2px;
    background: #474747;
    color: #eee;
}

.group .dim {
    color: #7e7e7e;
}

#feather {
    width: 45px;
    margin: 0 8px 0 5px;
}

#alias {
    appearance: none;
    width: 7px;
    height: 7px;
    margin-right: 4px;
    background: #4b4b4b;
}

.select {
    display: flex;
    align-items: center;
    padding-right: 3px;
    background: #434343;
    color: #eee;
}

.select select {
    flex: 1;
    appearance: none;
    height: 14px;
    padding-left: 5px;
    outline: none;
}

.sizes .select {
    width: 53px;
    margin: 0 11px 0 5px;
}

.sizes input[type="text"] {
    margin-left: 5px;
}

.swap {
    margin: 0 12px;
    color: #aaa;
}

.mask-button {
    height: 14px;
    margin-left: 8px;
    padding: 0 8px;
    background: #434343;
    color: #f0f0f0;
}

.right-tools {
    display: flex;
    gap: 10px;
    margin-left: auto;
    padding-right: 3px;
}

.right-tools button {
    display: flex;
    align-items: center;
    gap: 5px;
}

/* document */
.workspace {
    flex: 1;
    display: grid;
    grid-template-columns: 1fr 31px 200px;
}

.document {
    display: flex;
    flex-direction: column;
}

.doc-tabs {
    display: flex;
    height: 21px;
    background: #424242;
}

.doc-tab {
    display: flex;
    align-items: center;
    gap: 6px;
    padding: 0 8px;
    background: #505050;
    color: #e8e8e8;
    white-space: nowrap;
}

.doc-tab small {
    font-size: 9px;
    color: #aaa;
}

.stage {
    flex: 1;
    display: flex;
}

.toolbox {
    display: flex;
    flex-direction: column;
    width: 28px;
    border-right: 1px solid #3e3e3e;
    background: #535353;
}

.toolbox-head {
    display: flex;
    align-items: center;
    gap: 6px;
    height: 12px;
    margin-bottom: 10px;
    padding-left: 5px;
    background: #3c3c3c;
}

.toolbox-head svg {
    width: 7px;
    height: 7px;
}

.tools {
    flex: 1;
    display: flex;
    flex-direction: column;
}

.tools button {
    position: relative;
    flex: 1;
    display: grid;
    place-items: center;
    width: 22px;
    margin-left: 2px;
    color: #cfcfcf;
}

.tools svg {
    width: 13px;
    height: 13px;
}

.tools .active {
    background: #333;
}

.more::after {
    content: "";
    position: absolute;
    right: 0;
    bottom: 2px;
    border: 1px solid transparent;
    border-right-color: #bbb;
    border-bottom-color: #bbb;
}

.tools-bottom {
    flex: none;
    height: 58px;
}

.default-colors {
    display: flex;
    align-items: center;
    justify-content: space-between;
    height: 14px;
    padding: 0 4px 0 3px;
}

.default-colors i {
    width: 5px;
    height: 5px;
    background: #000;
    box-shadow: 0 0 0 1px #000, 2px 2px 0 1px #999;
}

.default-colors svg {
    width: 8px;
    height: 8px;
}

.swatches {
    display: grid;
    grid-template-columns: 6px 8px 6px;
    grid-template-rows: 6px 8px 6px;
    width: 20px;
    margin: 1px 3px 2px;
}

.swatches .fg {
    z-index: 1;
    grid-area: 1 / 1 / 3 / 3;
    border: 1px solid #d0c4c4;
    background: #7f4a4c;
}

.swatches .bg {
    grid-area: 2 / 2 / 4 / 4;
    background: #fff;
}

.canvas {
    flex: 1;
    display: flex;
    align-items: center;
    background: #282828;
}

.page {
    flex: 1;
    aspect-ratio: 526 / 334;
    background: #fefdfe;
}

.vscroll {
    display: flex;
    flex-direction: column;
    align-items: center;
    width: 12px;
    padding: 4px 0;
    border-right: 1px solid #3c3c3c;
    background: #4b4b4b;
}

.vscroll svg {
    width: 7px;
    height: 7px;
    color: #8a8a8a;
}

.vscroll svg:last-child {
    margin-top: auto;
}

.vscroll i {
    width: 9px;
    height: 69%;
    margin-top: 2px;
    background: #696768;
}

.up {
    rotate: 180deg;
}

.status {
    display: flex;
    align-items: center;
    height: 13px;
    padding-left: 5px;
    background: #4c4c4c;
    white-space: nowrap;
}

.zoom {
    width: 37px;
    font-size: 9px;
}

.next {
    margin-left: 9px;
    font-size: 7px;
}

.hscroll {
    flex: 1;
    padding: 0 170px 0 114px;
}

.hscroll i {
    width: 100%;
    height: 8px;
    background: #666;
}

/* dock */
.dock {
    border-right: 2px solid #414141;
}

.dock-head {
    display: flex;
    justify-content: flex-end;
    align-items: center;
    height: 10px;
    padding-right: 4px;
    background: #444;
}

.dock-head svg {
    width: 7px;
    height: 7px;
}

.dock button {
    display: grid;
    place-items: center;
    width: 100%;
    height: 29px;
    border-bottom: 1px solid #404040;
}

.dock button svg {
    width: 13px;
    height: 13px;
    color: #e4e4e4;
}

/* panels */
.panels {
    display: flex;
    flex-direction: column;
}

.panel-tabs {
    display: flex;
    align-items: center;
    height: 20px;
    border-bottom: 1px solid #3e3e3e;
    background: #434343;
    color: #999;
}

.panel-tabs a {
    height: 20px;
    padding: 0 6px;
    border-right: 1px solid #3d3d3d;
    line-height: 18px;
}

.panel-tabs .active {
    background: #535353;
    color: #f2f2f2;
    font-weight: bold;
}

.panel-tabs svg {
    width: 7px;
    height: 7px;
    margin: 0 4px 0 auto;
}

.color-body {
    display: flex;
    gap: 4px;
    padding: 4px 11px 14px 4px;
    border-bottom: 2px solid #414141;
}

.color-body .swatches {
    margin: 3px 2px;
}

.field {
    position: relative;
    flex: 1;
    height: 148px;
    margin-right: 8px;
    background: linear-gradient(to top, #000, transparent), linear-gradient(to right, #fff, #f00);
}

.field i {
    position: absolute;
    left: 36%;
    top: 46%;
    width: 9px;
    height: 9px;
    border: 1px solid #eee;
    border-radius: 50%;
}

.hue {
    position: relative;
    width: 14px;
    height: 149px;
    background: linear-gradient(#f00, #f0f 17%, #00f 33%, #0ff 50%, #0f0 67%, #ff0 83%, #f20);
}

.hue i {
    position: absolute;
    left: -6px;
    bottom: -2px;
    border: 3px solid transparent;
    border-left: 4px solid #fff;
}

.doc-row {
    display: flex;
    align-items: center;
    gap: 5px;
    height: 25px;
    padding-left: 8px;
    border-bottom: 1px solid #474747;
}

.doc-row span {
    padding: 2px;
    background: #3a3a3a;
}

.doc-row svg {
    width: 11px;
    height: 11px;
}

.props {
    display: flex;
    height: 146px;
    border-bottom: 2px solid #414141;
}

.props-main {
    flex: 1;
    padding: 5px 0 0 4px;
}

.props .vscroll {
    width: 11px;
    padding-bottom: 20px;
    border-right: none;
}

.props .vscroll i {
    height: 38px;
}

.props h2 {
    display: flex;
    align-items: center;
    gap: 4px;
    margin: 0 0 9px;
    font-size: 9px;
    color: #f4f4f4;
}

.props h2 svg {
    width: 8px;
    height: 8px;
    color: #aaa;
}

.dims {
    display: grid;
    grid-template-columns: 16px 16px 40px 12px 40px;
    gap: 7px 4px;
    align-items: center;
    text-align: right;
}

.dims svg {
    grid-row: 1 / 3;
    width: 12px;
    height: 12px;
    margin-left: 6px;
}

.dims input {
    width: 100%;
    height: 14px;
    padding: 0 2px;
    background: #434343;
    color: #f0f0f0;
}

.dims input:disabled {
    background: #4e4e4e;
    color: #6c6c6c;
}

.orient {
    display: flex;
    gap: 3px;
    margin: 9px 0 6px 45px;
}

.orient button {
    padding: 2px;
}

.orient svg {
    width: 12px;
    height: 12px;
}

.orient .active {
    background: #333;
}

.props p {
    margin: 0 0 7px 45px;
}

.mode {
    display: flex;
    align-items: center;
    gap: 8px;
    margin-left: 22px;
}

.mode .select {
    width: 98px;
}

/* layers */
.layers {
    flex: 1;
    display: flex;
    flex-direction: column;
}

.row {
    display: flex;
    align-items: center;
    height: 20px;
    border-bottom: 1px solid #464646;
    color: #8c8c8c;
}

.row svg {
    width: 10px;
    height: 10px;
    color: #b0b0b0;
}

.row input {
    width: 36px;
    height: 11px;
    padding: 0 2px;
    background: #484848;
    color: #7a7a7a;
}

.filter {
    gap: 7px;
    height: 25px;
    padding: 2px 0 0 4px;
}

.kind {
    display: flex;
    align-items: center;
    gap: 3px;
    width: 59px;
    height: 14px;
    margin-right: 5px;
    padding-left: 4px;
    background: #4b4b4b;
}

.kind svg {
    width: 8px;
    height: 8px;
}

.dot {
    width: 6px;
    height: 6px;
    margin: 0 0 6px 4px;
    border-radius: 50%;
    background: #a8a8a8;
}

.blend {
    gap: 5px;
    padding-left: 4px;
}

.blend select {
    appearance: none;
    width: 81px;
    height: 13px;
    padding-left: 4px;
    background: #4c4c4c;
    color: #888;
    opacity: 1;
}

.locks {
    gap: 6px;
    padding-left: 4px;
    border-bottom: none;
}

.layer-list {
    flex: 1;
    padding-top: 2px;
    background: #4c4c4c;
}

.layer {
    display: flex;
    align-items: center;
    gap: 7px;
    padding: 0 12px 0 6px;
}

.layer > svg {
    width: 10px;
    height: 10px;
    color: #e8e8e8;
}

.layer-name {
    flex: 1;
    display: flex;
    align-items: center;
    gap: 8px;
    height: 17px;
    padding: 0 10px 0 2px;
    background: #6a6a6a;
    color: #f2f2f2;
}

.layer-name i {
    width: 22px;
    height: 11px;
    background: #fff;
}

.layer-name svg {
    width: 10px;
    height: 10px;
    margin-left: auto;
}

.layer-actions {
    display: flex;
    justify-content: flex-end;
    align-items: center;
    gap: 9px;
    height: 17px;
    padding-right: 19px;
    border-top: 1px solid #464646;
    color: #e6e6e6;
}

.layer-actions svg {
    width: 10px;
    height: 10px;
}

.layer-actions .dim {
    color: #858585;
}

.fx {
    color: #a0a0a0;
    font-size: 9px;
    font-style: italic;
}

/* watermarks lie over everything */
.stamp {
    position: absolute;
    left: 50%;
    top: 294px;
    translate: calc(97px - 50%) -50%;
    rotate: -17.6deg;
    font-family: "Liberation Sans", "Noto Sans CJK SC", sans-serif;
    font-size: 30px;
    font-weight: bold;
    line-height: 40px;
    white-space: nowrap;
    color: rgba(255, 255, 255, 0.7);
    -webkit-text-stroke: 1px rgba(120, 120, 120, 0.6);
    text-shadow: -1px 2px 3px rgba(0, 0, 0, 0.12);
    pointer-events: none;
}

.brand {
    position: absolute;
    right: 33px;
    bottom: 21px;
    display: flex;
    align-items: center;
    gap: 8px;
    font-family: "Liberation Sans", "Noto Sans CJK SC", sans-serif;
    font-size: 28px;
    line-height: 40px;
    white-space: nowrap;
    color: #a6a6a6;
    pointer-events: none;
}

.brand b {
    padding: 0 11px;
}

.brand svg {
    width: 38px;
    height: 33px;
}
```

FILE: script.js
```js
// Draws the QR card: three finder squares, one alignment square, filled modules between
const size = 37;
const qr = document.getElementById('qrCode');
let seed = 20231;
let path = '';

function random() {
    seed = (seed * 16807) % 2147483647;
    return seed / 2147483647;
}

function square(x, y, outer, col, row) {
    const dx = col - x;
    const dy = row - y;
    const half = (outer - 1) / 2;
    const ring = Math.max(Math.abs(dx - half), Math.abs(dy - half));
    if (ring > half + 1) return null;
    return ring === half || ring < half - 1;
}

for (let row = 0; row < size; row++) {
    for (let col = 0; col < size; col++) {
        let dark = random() < 0.5;
        const marks = [
            square(0, 0, 7, col, row),
            square(size - 7, 0, 7, col, row),
            square(0, size - 7, 7, col, row),
            square(size - 9, size - 9, 5, col, row)
        ];
        marks.forEach((mark, index) => {
            if (mark !== null && !(index === 3 && mark === false && Math.max(Math.abs(col - 30), Math.abs(row - 30)) > 2)) dark = mark;
        });
        if (dark) path += `M${col} ${row}h1v1h-1z`;
    }
}

qr.innerHTML = `<path d="${path}" fill="#111"/>`;
```
